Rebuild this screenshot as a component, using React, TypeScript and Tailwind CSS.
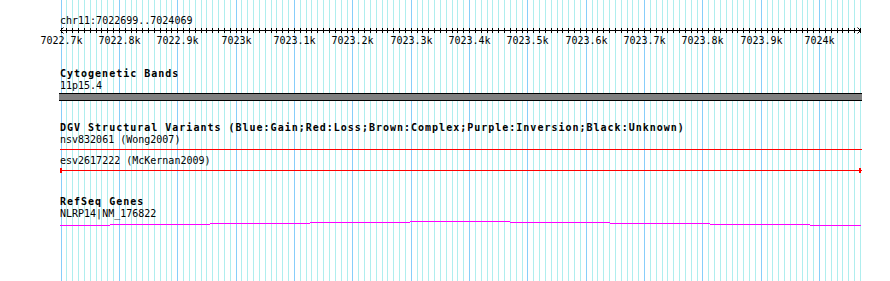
import React from "react";

const START = 7022699;
const px = (p: number) => Math.round(60 + ((p - START) * 800) / 1371);

const minor: number[] = [];
for (let p = 7022700; p <= 7024070; p += 10) minor.push(p);

const majors = [
  { p: 7022700, t: "7022.7k" },
  { p: 7022800, t: "7022.8k" },
  { p: 7022900, t: "7022.9k" },
  { p: 7023000, t: "7023k" },
  { p: 7023100, t: "7023.1k" },
  { p: 7023200, t: "7023.2k" },
  { p: 7023300, t: "7023.3k" },
  { p: 7023400, t: "7023.4k" },
  { p: 7023500, t: "7023.5k" },
  { p: 7023600, t: "7023.6k" },
  { p: 7023700, t: "7023.7k" },
  { p: 7023800, t: "7023.8k" },
  { p: 7023900, t: "7023.9k" },
  { p: 7024000, t: "7024k" },
];

const geneSegs = [
  { x1: 60, x2: 110, y: 5 },
  { x1: 110, x2: 210, y: 4 },
  { x1: 210, x2: 310, y: 3 },
  { x1: 310, x2: 410, y: 2 },
  { x1: 410, x2: 510, y: 1 },
  { x1: 510, x2: 610, y: 2 },
  { x1: 610, x2: 710, y: 3 },
  { x1: 710, x2: 810, y: 4 },
  { x1: 810, x2: 861, y: 5 },
];

function Grid() {
  return (
    <svg className="absolute left-0 top-0" width={890} height={281}>
      {minor.map((p) => (
        <rect
          key={p}
          x={px(p)}
          y={0}
          width={1}
          height={281}
          fill={p % 100 === 0 ? "#87cefa" : "#afeeee"}
        />
      ))}
    </svg>
  );
}

function Ruler() {
  return (
    <svg width={890} height={21} className="-ml-[60px] block">
      <rect x={60} y={3} width={801} height={1} fill="#000" />
      {minor.map((p) => (
        <rect key={p} x={px(p)} y={1} width={1} height={5} fill="#000" />
      ))}
      <path d="M60.5 3.5 L63.5 0.5 M60.5 3.5 L63.5 6.5" stroke="#000" strokeWidth={1} fill="none" />
      <path d="M860.5 3.5 L857.5 0.5 M860.5 3.5 L857.5 6.5" stroke="#000" strokeWidth={1} fill="none" />
      {majors.map((m) => (
        <text key={m.p} x={px(m.p) + 0.5} y={17} textAnchor="middle" fill="#000" fontSize={10}>
          {m.t}
        </text>
      ))}
    </svg>
  );
}

export default function App() {
  return (
    <div className="relative w-[890px] h-[281px] bg-white overflow-hidden font-['DejaVu_Sans_Mono',monospace] text-[10px] text-black">
      <Grid />
      <div className="relative flex flex-col pl-[60px] pt-[15px]">
        <div className="h-[12px] leading-[12px] whitespace-pre">chr11:7022699..7024069</div>
        <Ruler />

        <div className="mt-[20px] h-[12px] leading-[12px] font-bold tracking-[1px] whitespace-pre">Cytogenetic Bands</div>
        <div className="h-[12px] leading-[12px] whitespace-pre">11p15.4</div>
        <div className="mt-[1px] -ml-px w-[803px] h-[8px] bg-[#808080] border-y border-black" />

        <div className="mt-[21px] h-[12px] leading-[12px] font-bold tracking-[1px] whitespace-pre">
          DGV Structural Variants (Blue:Gain;Red:Loss;Brown:Complex;Purple:Inversion;Black:Unknown)
        </div>
        <div className="h-[12px] leading-[12px] whitespace-pre">nsv832061 (Wong2007)</div>
        <div className="mt-[3px] w-[802px] h-px bg-[#ff0000]" />
        <div className="mt-[5px] h-[12px] leading-[12px] whitespace-pre">esv2617222 (McKernan2009)</div>
        <svg width={802} height={5} className="mt-[1px] block">
          <rect x={0} y={2} width={802} height={1} fill="#ff0000" />
          <rect x={0} y={0} width={2} height={5} fill="#ff0000" />
          <rect x={799} y={0} width={2} height={5} fill="#ff0000" />
        </svg>

        <div className="mt-[23px] h-[12px] leading-[12px] font-bold tracking-[1px] whitespace-pre">RefSeq Genes</div>
        <div className="h-[12px] leading-[12px] whitespace-pre">NLRP14|NM_176822</div>
        <svg width={802} height={6} className="block">
          {geneSegs.map((s, i) => (
            <rect key={i} x={s.x1 - 60} y={s.y} width={s.x2 - s.x1} height={1} fill="#ff00ff" />
          ))}
        </svg>
      </div>
    </div>
  );
}
